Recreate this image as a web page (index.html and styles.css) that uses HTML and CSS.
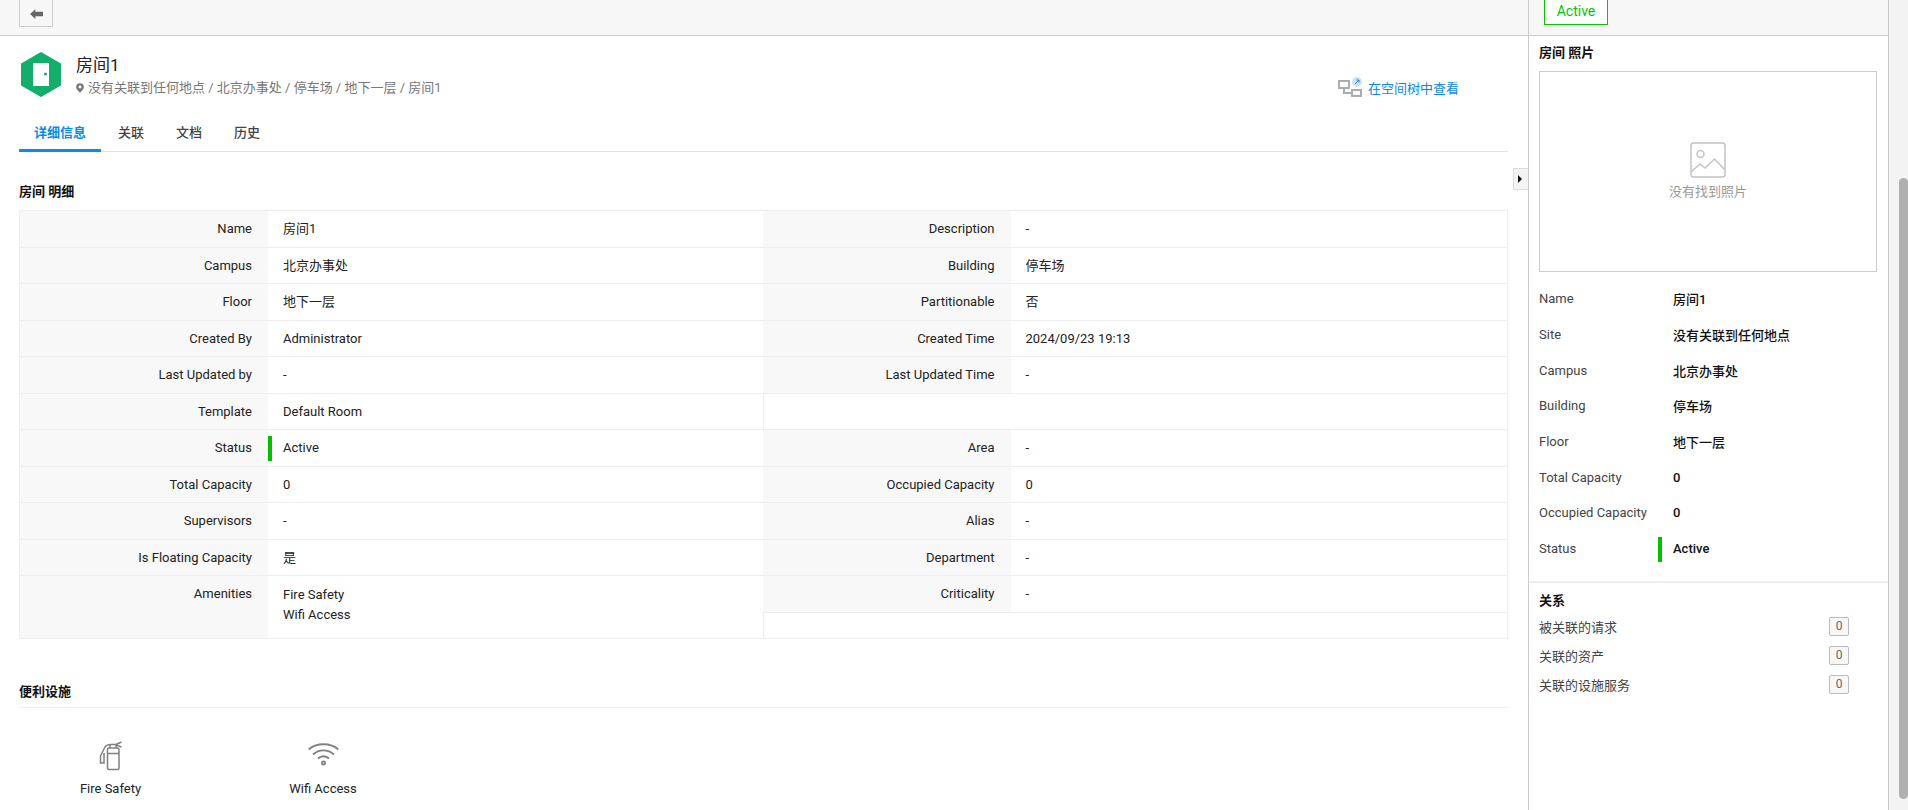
FILE: index.html
```html
<!DOCTYPE html>
<html lang="zh">
<head>
<meta charset="utf-8">
<title>房间1</title>
<link rel="stylesheet" href="styles.css">
</head>
<body>
<div class="app">
  <main class="main">
    <header class="topbar">
      <button class="back-btn" aria-label="Back">
        <svg width="13" height="10" viewBox="0 0 12 9"><path class="i-gray" d="M0 4.500 5 0V2.500H12V6.500H5V9Z"/></svg>
      </button>
    </header>
    <section class="content">
      <div class="title-row">
        <svg class="hex" width="40" height="45" viewBox="0 0 40 45">
          <path d="M20 1 39 12V33L20 44 1 33V12Z" fill="#13ad6c" stroke="#13ad6c" stroke-width="2" stroke-linejoin="round"/>
          <rect x="12" y="11" width="16" height="23" fill="#fff"/>
          <circle cx="24.500" cy="22" r="1.500" fill="#13ad6c"/>
        </svg>
        <div class="title-text">
          <h1 class="title">房间1</h1>
          <div class="crumbs">
            <svg width="8" height="10" viewBox="0 0 10 12"><path fill-rule="evenodd" class="i-gray2" d="M5 0a4.800 4.800 0 0 1 4.800 4.800C9.800 8 5 12 5 12S.2 8 .2 4.800A4.800 4.800 0 0 1 5 0Zm0 3a1.800 1.800 0 1 0 0 3.600A1.800 1.800 0 0 0 5 3Z"/></svg>
            <span>没有关联到任何地点 / 北京办事处 / 停车场 / 地下一层 / 房间1</span>
          </div>
        </div>
        <a class="tree-link" href="#">
          <svg width="24" height="20" viewBox="0 0 24 20">
            <path d="M1 4h10v7H1zM6 11v5H13M14 13h9v6h-9z" fill="none" stroke="#a9adb0" stroke-width="2"/>
            <circle cx="19" cy="5" r="5" fill="#cfe0fb"/>
            <path d="M17 7 21 3M18.300 3H21V5.700" fill="none" stroke="#3d7fe0" stroke-width="1"/>
          </svg>
          <span>在空间树中查看</span>
        </a>
      </div>
      <nav class="tabs">
        <a class="tab active">详细信息</a>
        <a class="tab">关联</a>
        <a class="tab">文档</a>
        <a class="tab">历史</a>
      </nav>
      <h2 class="sec-title">房间 明细</h2>
      <div class="detail">
        <div class="row"><div class="k">Name</div><div class="v">房间1</div></div>
        <div class="row"><div class="k">Description</div><div class="v">-</div></div>
        <div class="row"><div class="k">Campus</div><div class="v">北京办事处</div></div>
        <div class="row"><div class="k">Building</div><div class="v">停车场</div></div>
        <div class="row"><div class="k">Floor</div><div class="v">地下一层</div></div>
        <div class="row"><div class="k">Partitionable</div><div class="v">否</div></div>
        <div class="row"><div class="k">Created By</div><div class="v">Administrator</div></div>
        <div class="row"><div class="k">Created Time</div><div class="v">2024/09/23 19:13</div></div>
        <div class="row"><div class="k">Last Updated by</div><div class="v">-</div></div>
        <div class="row"><div class="k">Last Updated Time</div><div class="v">-</div></div>
        <div class="row"><div class="k">Template</div><div class="v">Default Room</div></div>
        <div class="row blank"></div>
        <div class="row"><div class="k">Status</div><div class="v status">Active</div></div>
        <div class="row"><div class="k">Area</div><div class="v">-</div></div>
        <div class="row"><div class="k">Total Capacity</div><div class="v">0</div></div>
        <div class="row"><div class="k">Occupied Capacity</div><div class="v">0</div></div>
        <div class="row"><div class="k">Supervisors</div><div class="v">-</div></div>
        <div class="row"><div class="k">Alias</div><div class="v">-</div></div>
        <div class="row"><div class="k">Is Floating Capacity</div><div class="v">是</div></div>
        <div class="row"><div class="k">Department</div><div class="v">-</div></div>
        <div class="row tall"><div class="k">Amenities</div><div class="v">Fire Safety<br>Wifi Access</div></div>
        <div class="split">
          <div class="row"><div class="k">Criticality</div><div class="v">-</div></div>
        </div>
      </div>
      <h2 class="sec-title amen-title">便利设施</h2>
      <div class="amenities">
        <div class="amenity">
          <svg width="24" height="30" viewBox="0 0 24 30" fill="none" stroke="#808080" stroke-width="1.500">
            <rect x="8.500" y="7" width="11.500" height="21.500" rx="1.500"/>
            <path d="M8.500 12.500H20M11 7V3.500h6V7M17 3.500 22.500 1M17 4l5.500 2M11 3.500C7.500 3.500 5.500 6 4.500 9L1.500 15V22H5V12"/>
          </svg>
          <span>Fire Safety</span>
        </div>
        <div class="amenity">
          <svg width="31" height="30" viewBox="0 -1 31 30" fill="none" stroke="#808080" stroke-width="1.800">
            <path d="M.8 7.500C8 .5 23 .5 30.200 7.500M5 12.500C11 7 20 7 26 12.500M10 16.500C13 13.500 18 13.500 21 16.500"/>
            <circle cx="15.500" cy="21" r="1.600" stroke-width="1.800"/>
          </svg>
          <span>Wifi Access</span>
        </div>
      </div>
    </section>
    <button class="collapse" aria-label="Collapse"><i class="tri"></i></button>
  </main>
  <aside class="side">
    <header class="topbar side-top"><span class="state">Active</span></header>
    <h3 class="side-title">房间 照片</h3>
    <div class="photo">
      <svg width="36" height="36" viewBox="0 0 36 36" fill="none" stroke="#c4c4c4" stroke-width="1.500">
        <rect x="1" y="1" width="34" height="34" rx="2.500"/>
        <circle cx="10.500" cy="12" r="3.500"/>
        <path d="M1 30 10 22 15 26 24.500 17 35 28"/>
      </svg>
      <span>没有找到照片</span>
    </div>
    <dl class="facts">
      <div class="fact"><dt>Name</dt><dd>房间1</dd></div>
      <div class="fact"><dt>Site</dt><dd>没有关联到任何地点</dd></div>
      <div class="fact"><dt>Campus</dt><dd>北京办事处</dd></div>
      <div class="fact"><dt>Building</dt><dd>停车场</dd></div>
      <div class="fact"><dt>Floor</dt><dd>地下一层</dd></div>
      <div class="fact"><dt>Total Capacity</dt><dd>0</dd></div>
      <div class="fact"><dt>Occupied Capacity</dt><dd>0</dd></div>
      <div class="fact"><dt>Status</dt><dd class="status">Active</dd></div>
    </dl>
    <div class="relations">
      <h3 class="rel-title">关系</h3>
      <div class="rel"><span>被关联的请求</span><b class="count">0</b></div>
      <div class="rel"><span>关联的资产</span><b class="count">0</b></div>
      <div class="rel"><span>关联的设施服务</span><b class="count">0</b></div>
    </div>
  </aside>
  <div class="scroll"><div class="thumb"></div></div>
</div>
</body>
</html>
```
FILE: styles.css
```css
* { box-sizing: border-box; }
html, body { margin: 0; height: 100%; overflow: hidden; background: #fff; }
body {
  font-family: Roboto, "Noto Sans CJK SC", sans-serif;
  font-size: 13px;
  color: #222;
}
h1, h2, h3, dl, dd { margin: 0; font-weight: 400; }
a { text-decoration: none; color: inherit; }
.i-gray { fill: #666; }
.i-gray2 { fill: #777; }

.app { display: flex; height: 810px; }
.main { position: relative; width: 1529px; flex: none; border-right: 1px solid #ccc; }
.side { width: 360px; flex: none; border-right: 1px solid #ccc; }
.scroll { flex: 1; background: #f3f3f3; padding: 178px 0 11px 10px; }
.thumb { height: 621px; background: #b0b0b0; border-radius: 5px; }

.topbar { height: 36px; background: #f7f7f7; border-bottom: 1px solid #ccc; padding-left: 19px; }
.back-btn {
  display: flex; align-items: center; justify-content: center;
  width: 34px; height: 27px; margin: 0; padding: 1px 0 0;
  background: #f7f7f7; border: 1px solid #ccc; border-top: 0;
}
.content { padding: 16px 20px 0 19px; }

.title-row { display: flex; height: 46px; align-items: flex-start; }
.hex { margin: 0 0 0 2px; flex: none; }
.title-text { margin-left: 15px; flex: 1; }
.title { font-size: 17px; line-height: 22px; color: #222; margin-top: 2px; }
.crumbs { display: flex; align-items: center; gap: 4px; color: #777; line-height: 20px; margin-top: 2px; }
.tree-link { display: flex; align-items: center; gap: 6px; color: #1088e0; margin: 25px 49px 0 0; }

.tabs { display: flex; gap: 2px; height: 40px; margin-top: 14px; border-bottom: 1px solid #e2e2e2; }
.tab { padding: 11px 15px 0; height: 40px; line-height: 20px; color: #444; font-weight: 500; }
.tab.active { color: #0a8ce0; font-weight: 700; border-bottom: 3px solid #0a8ce0; }

.sec-title { font-size: 13px; font-weight: 700; color: #111; line-height: 20px; margin-top: 30px; }

.detail {
  display: grid; grid-template-columns: 742.5px 1fr; grid-template-rows: repeat(10, 36.5px) 62px;
  margin-top: 8px; border: 1px solid #eee;
}
.row { display: flex; border-bottom: 1px solid #eee; min-width: 0; }
.k { width: 248px; flex: none; background: #f8f8f8; padding-right: 16px; text-align: right; line-height: 36px; }
.v { flex: 1; padding-left: 15px; line-height: 36px; color: #222; }
.row.tall { border-bottom: 0; }
.row.tall .v { line-height: 20px; padding-top: 9px; }
.split { box-shadow: inset 1px 0 #eee; }
.split .row { height: 37px; }
.blank { box-shadow: inset 1px 0 #eee; }
.v.status { position: relative; }
.v.status::before {
  content: ""; position: absolute; left: 0; top: 6px; width: 4px; height: 25px; background: #00c000;
}

.amen-title { margin-top: 41px; padding-bottom: 3px; border-bottom: 1px solid #eee; line-height: 24px; }
.amenities { display: flex; gap: 29.5px; margin-top: 33px; }
.amenity { width: 183px; display: flex; flex-direction: column; align-items: center; gap: 9px; line-height: 18px; }

.collapse {
  position: absolute; right: 0; top: 168px; width: 15px; height: 22px; padding: 0 0 0 4px;
  background: #f4f4f4; border: 1px solid #ddd; border-right: 0; display: flex; align-items: center;
}
.tri { width: 0; height: 0; border-left: 4px solid #111; border-top: 4px solid transparent; border-bottom: 4px solid transparent; }

.side-top { padding-left: 15px; }
.state {
  display: block; width: 64px; height: 25px; text-align: center; line-height: 23px;
  border: 1px solid #0bbf0b; border-top: 0; color: #0abf0a; font-size: 14px; background: #fff;
}
.side-title { font-size: 13px; font-weight: 700; color: #111; line-height: 20px; margin: 7px 0 0 10px; }
.photo {
  display: flex; flex-direction: column; align-items: center; gap: 3px;
  width: 338px; height: 201px; margin: 8px 0 0 10px; padding-top: 70px;
  border: 1px solid #ccc; color: #999;
}
.facts { margin: 9px 0 0 10px; }
.fact { display: flex; height: 35.7px; align-items: center; }
.fact dt { width: 134px; color: #444; }
.fact dd { font-weight: 500; color: #111; }
.fact .status { position: relative; }
.fact .status::before { content: ""; position: absolute; left: -15px; top: -4px; width: 4px; height: 25px; background: #00c000; }
.relations { margin-top: 14px; border-top: 2px solid #eee; padding: 8px 39px 0 10px; }
.rel-title { font-size: 13px; font-weight: 700; color: #111; line-height: 20px; }
.rel { display: flex; justify-content: space-between; align-items: center; height: 28.8px; color: #444; }
.rel:first-of-type { margin-top: 2px; }
.count {
  width: 20px; height: 19px; border: 1px solid #bbb; border-radius: 2px; background: #f7f7f7;
  color: #666; font-weight: 400; font-size: 12px; line-height: 17px; text-align: center;
}
```
